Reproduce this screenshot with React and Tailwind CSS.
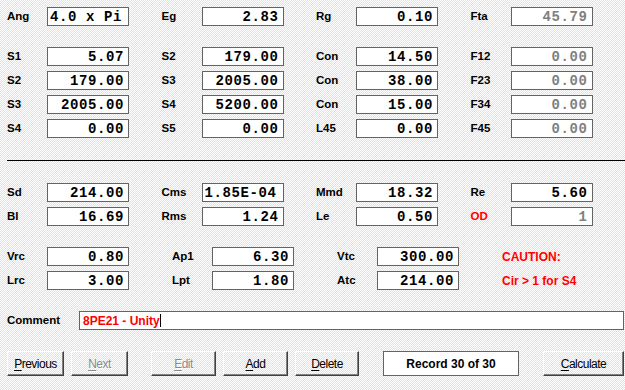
import React from 'react'

const sans = "font-['Liberation_Sans',Arial,sans-serif]"

function Field({ value, left, dim }) {
  return (
    <div
      className={`h-[19px] w-[82px] border border-[#646464] bg-white flex items-center font-['Liberation_Mono','Courier_New',monospace] font-bold text-[14px] tracking-[0.6px] leading-none ${
        left ? 'justify-start pl-[2px]' : 'justify-end pr-[4px]'
      } ${dim ? 'text-[#808080]' : 'text-black'}`}
    >
      {value}
    </div>
  )
}

function Cell({ label, value, left, dim, red }) {
  return (
    <div className="flex items-center w-[165px] h-[19px]">
      <span className={`w-[40px] text-[11.5px] font-bold leading-none ${red ? 'text-[#ff0000]' : 'text-black'}`}>
        {label}
      </span>
      {value !== undefined && <Field value={value} left={left} dim={dim} />}
    </div>
  )
}

function Row({ cells }) {
  return (
    <div className="flex">
      {cells.map((c, i) => (
        <Cell key={i} {...c} />
      ))}
    </div>
  )
}

// win95 style push button
function Btn({ label, hot, w, disabled, className = '' }) {
  const rest = label.slice(1)
  return (
    <button
      className={`${w} h-[25px] border border-t-white border-l-white border-r-[#404040] border-b-[#404040] shadow-[inset_-1px_-1px_0_#808080] flex items-center justify-center text-[12px] tracking-[-0.5px] leading-none ${
        disabled ? 'text-[#8a8a8a] [text-shadow:1px_1px_0_#fff]' : 'text-black'
      } ${className}`}
    >
      <span>
        <u className="underline-offset-2">{hot}</u>
        {rest}
      </span>
    </button>
  )
}

const top = [
  [
    { label: 'S1', value: '5.07' },
    { label: 'S2', value: '179.00' },
    { label: 'Con', value: '14.50' },
    { label: 'F12', value: '0.00', dim: true },
  ],
  [
    { label: 'S2', value: '179.00' },
    { label: 'S3', value: '2005.00' },
    { label: 'Con', value: '38.00' },
    { label: 'F23', value: '0.00', dim: true },
  ],
  [
    { label: 'S3', value: '2005.00' },
    { label: 'S4', value: '5200.00' },
    { label: 'Con', value: '15.00' },
    { label: 'F34', value: '0.00', dim: true },
  ],
  [
    { label: 'S4', value: '0.00' },
    { label: 'S5', value: '0.00' },
    { label: 'L45', value: '0.00' },
    { label: 'F45', value: '0.00', dim: true },
  ],
]

export default function App() {
  return (
    <div
      className={`w-[625px] h-[390px] overflow-hidden bg-[repeating-conic-gradient(#e1e1e1_0_25%,#ffffff_0_50%)] bg-[length:2px_2px] pt-[7px] ${sans}`}
    >
      <div className="pl-[7px]">
        <Row
          cells={[
            { label: 'Ang', value: '4.0 x Pi', left: true },
            { label: 'Eg', value: '2.83' },
            { label: 'Rg', value: '0.10' },
            { label: 'Fta', value: '45.79', dim: true },
          ]}
        />

        <div className="mt-[21px] flex flex-col gap-[5px]">
          {top.map((r, i) => (
            <Row key={i} cells={r} />
          ))}
        </div>
      </div>

      <div className="mt-[22px] ml-[7px] h-px bg-black" />

      <div className="pl-[7px]">
        <div className="mt-[22px] flex flex-col gap-[5px]">
          <Row
            cells={[
              { label: 'Sd', value: '214.00' },
              { label: 'Cms', value: '1.85E-04', left: true },
              { label: 'Mmd', value: '18.32' },
              { label: 'Re', value: '5.60' },
            ]}
          />
          <Row
            cells={[
              { label: 'Bl', value: '16.69' },
              { label: 'Rms', value: '1.24' },
              { label: 'Le', value: '0.50' },
              { label: 'OD', value: '1', red: true, dim: true },
            ]}
          />
        </div>

        <div className="mt-[21px] flex flex-col gap-[5px]">
          <div className="flex">
            <Cell label="Vrc" value="0.80" />
            <Cell label="Ap1" value="6.30" />
            <Cell label="Vtc" value="300.00" />
            <div className="h-[19px] flex items-center text-[12px] font-bold text-[#ff0000]">CAUTION:</div>
          </div>
          <div className="flex">
            <Cell label="Lrc" value="3.00" />
            <Cell label="Lpt" value="1.80" />
            <Cell label="Atc" value="214.00" />
            <div className="h-[19px] flex items-center text-[12px] font-bold text-[#ff0000]">Cir &gt; 1 for S4</div>
          </div>
        </div>

        <div className="mt-[21px] flex items-center">
          <span className="w-[72px] text-[11.5px] font-bold text-black">Comment</span>
          <div className="w-[545px] h-[19px] border border-[#646464] bg-white flex items-center pl-[3px] text-[12px] font-bold text-[#ff0000] leading-none">
            8PE21 - Unity
            <span className="inline-block w-px h-[13px] bg-black" />
          </div>
        </div>

        <div className="mt-[21px] flex items-center">
          <Btn label="Previous" hot="P" w="w-[57px]" />
          <Btn label="Next" hot="N" w="w-[57px]" disabled className="ml-[7px]" />
          <Btn label="Edit" hot="E" w="w-[65px]" disabled className="ml-[23px]" />
          <Btn label="Add" hot="A" w="w-[65px]" className="ml-[7px]" />
          <Btn label="Delete" hot="D" w="w-[64px]" className="ml-[7px]" />
          <div className="ml-[24px] w-[136px] h-[25px] border border-[#646464] bg-white flex items-center justify-center text-[12px] font-bold text-black">
            Record 30 of 30
          </div>
          <Btn label="Calculate" hot="C" w="w-[81px]" className="ml-[24px]" />
        </div>
      </div>
    </div>
  )
}
